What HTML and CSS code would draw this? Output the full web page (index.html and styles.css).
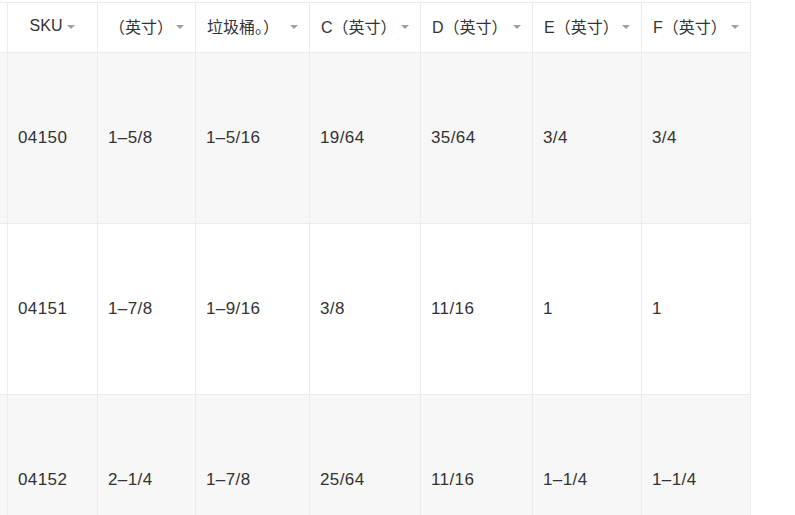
FILE: index.html
```html
<!DOCTYPE html>
<html lang="zh">
<head>
<meta charset="utf-8">
<link rel="stylesheet" href="styles.css">
</head>
<body>
<table class="grid">
  <colgroup>
    <col class="c-stub"><col class="c1"><col class="c2"><col class="c3"><col class="c4"><col class="c5"><col class="c6"><col class="c7">
  </colgroup>
  <thead>
    <tr>
      <th class="stub"></th>
      <th><div class="hd hd-center"><span>SKU</span><i class="caret"></i></div></th>
      <th><div class="hd"><span>（英寸）</span><i class="caret"></i></div></th>
      <th><div class="hd"><span>垃圾桶。）</span><i class="caret"></i></div></th>
      <th><div class="hd"><span>C（英寸）</span><i class="caret"></i></div></th>
      <th><div class="hd"><span>D（英寸）</span><i class="caret"></i></div></th>
      <th><div class="hd"><span>E（英寸）</span><i class="caret"></i></div></th>
      <th class="last"><div class="hd"><span>F（英寸）</span><i class="caret"></i></div></th>
    </tr>
  </thead>
  <tbody>
    <tr class="alt">
      <td class="stub"></td><td>04150</td><td>1–5/8</td><td>1–5/16</td><td>19/64</td><td>35/64</td><td>3/4</td><td class="last">3/4</td>
    </tr>
    <tr>
      <td class="stub"></td><td>04151</td><td>1–7/8</td><td>1–9/16</td><td>3/8</td><td>11/16</td><td>1</td><td class="last">1</td>
    </tr>
    <tr class="alt">
      <td class="stub"></td><td>04152</td><td>2–1/4</td><td>1–7/8</td><td>25/64</td><td>11/16</td><td>1–1/4</td><td class="last">1–1/4</td>
    </tr>
  </tbody>
</table>
</body>
</html>
```
FILE: styles.css
```css
html, body {
  margin: 0;
  padding: 0;
  background: #fff;
}
body {
  padding-top: 2px;
  font-family: "Liberation Sans", Arial, "Noto Sans CJK SC", sans-serif;
  font-size: 17px;
  color: #333;
  overflow: hidden;
}
.grid {
  border-collapse: separate;
  border-spacing: 0;
  table-layout: fixed;
  width: 751px;
}
.c-stub { width: 7px; }
.c1 { width: 90px; }
.c2 { width: 98px; }
.c3 { width: 114px; }
.c4 { width: 111px; }
.c5 { width: 112px; }
.c6 { width: 109px; }
.c7 { width: 110px; }

th, td {
  border-left: 1px solid #ebebeb;
  border-bottom: 1px solid #ebebeb;
  padding: 0 11px;
  text-align: left;
  font-weight: normal;
  white-space: nowrap;
  overflow: hidden;
}
th {
  border-top: 1px solid #ebebeb;
  height: 46px;
  padding-bottom: 3px;
  box-sizing: content-box;
  font-size: 16px;
}
td {
  height: 170px;
  vertical-align: middle;
  letter-spacing: 0.4px;
  padding-left: 10px;
}
th.stub, td.stub {
  border-left: none;
  padding: 0;
}
.last {
  border-right: 1px solid #ebebeb;
}
tr.alt td {
  background: #f7f7f7;
}
.hd {
  display: flex;
  align-items: center;
  justify-content: space-between;
}
.hd-center {
  justify-content: center;
  gap: 5px;
}
.caret {
  display: block;
  width: 0;
  height: 0;
  border-left: 4px solid transparent;
  border-right: 4px solid transparent;
  border-top: 4px solid #a0a0a0;
  flex: none;
  margin-top: 2px;
}
```
